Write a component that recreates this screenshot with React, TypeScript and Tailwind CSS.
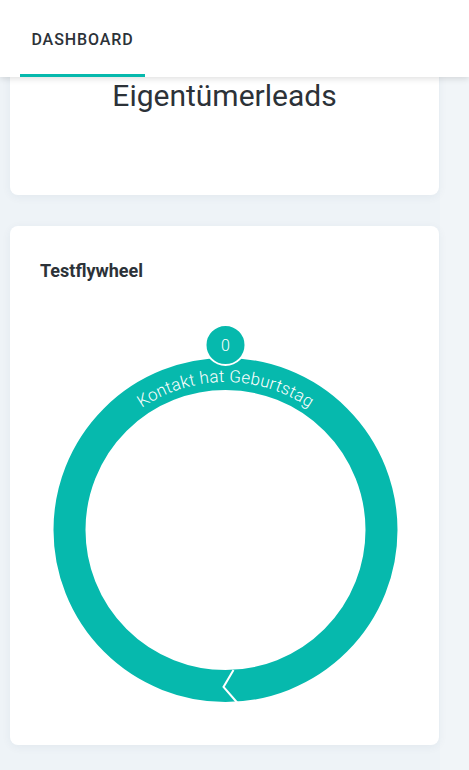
import React from "react";

const TEAL = "#06b9ad";

function Flywheel() {
  const cx = 185.5;
  const cy = 212;
  const tr = 148;
  return (
    <svg width="370" height="400" viewBox="0 0 370 400" className="block">
      <defs>
        <path id="arcText" d={`M ${cx - tr} ${cy} A ${tr} ${tr} 0 0 1 ${cx + tr} ${cy}`} />
      </defs>
      <circle cx={cx} cy={cy} r={156} fill="none" stroke={TEAL} strokeWidth={32} />
      <polyline
        points="193.5,352 183.5,369 197.5,385"
        fill="none"
        stroke="#ffffff"
        strokeWidth={2}
        strokeLinejoin="miter"
      />
      <text
        fill="#ffffff"
        fontSize="17"
        fontFamily="Roboto, 'Liberation Sans', sans-serif"
        fontWeight={300}
        letterSpacing="0.2"
      >
        <textPath href="#arcText" startOffset="50%" textAnchor="middle">
          Kontakt hat Geburtstag
        </textPath>
      </text>
      <circle cx={cx} cy={27} r={20} fill={TEAL} stroke="#ffffff" strokeWidth={2} />
      <text
        x={cx}
        y={33}
        fill="#ffffff"
        fontSize="16"
        textAnchor="middle"
        fontFamily="Roboto, 'Liberation Sans', sans-serif"
        fontWeight={300}
      >
        0
      </text>
    </svg>
  );
}

export default function App() {
  return (
    <div
      className="relative h-[770px] w-[469px] overflow-hidden bg-[#eef3f7] text-[#2c3238]"
      style={{ fontFamily: "Roboto, 'Liberation Sans', sans-serif" }}
    >
      <div className="absolute right-0 top-0 h-full w-[29px] bg-[#f1f5f8]" />
      <div className="relative flex flex-col gap-[31px] px-[10px] pr-[30px] pt-[10px]">
        <div className="flex h-[185px] flex-col items-center rounded-lg bg-white pt-[68px] shadow-[0_2px_10px_rgba(40,70,100,0.06)]">
          <div className="text-[30px] font-normal leading-[36px] text-[#2c3238]">Eigentümerleads</div>
        </div>
        <div className="flex h-[519px] flex-col rounded-lg bg-white pt-[33px] shadow-[0_2px_10px_rgba(40,70,100,0.06)]">
          <div className="pl-[30px] text-[18px] font-bold leading-[24px] text-[#2c3238]">Testflywheel</div>
          <div className="mt-[35px] flex justify-center">
            <Flywheel />
          </div>
        </div>
      </div>
      <div className="absolute left-0 top-0 flex h-[77px] w-full items-end bg-white shadow-[0_2px_6px_rgba(0,0,0,0.12)]">
        <div className="ml-[20px] flex h-full w-[125px] flex-col">
          <div className="flex flex-1 items-center justify-center pt-[6px] text-[16px] font-medium tracking-[0.9px] text-[#2c3238]">
            DASHBOARD
          </div>
          <div className="h-[3px] w-full bg-[#06b9ad]" />
        </div>
      </div>
    </div>
  );
}
